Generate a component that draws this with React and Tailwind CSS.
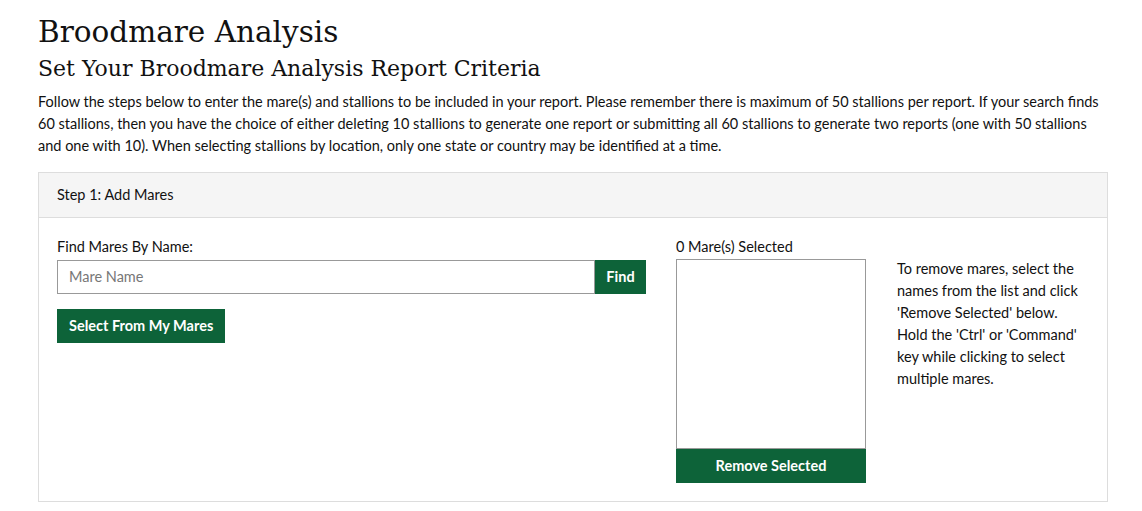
export default function App() {
  return (
    <div className="bg-white min-h-screen text-[#111] font-['Lato','Open_Sans',sans-serif]">
      <div className="pl-[38px] pr-[34px] pt-[14px]">
        <h1 className="font-['DejaVu_Serif','Liberation_Serif',serif] text-[29.5px] leading-[36px] text-[#111]">
          Broodmare Analysis
        </h1>
        <h2 className="font-['DejaVu_Serif','Liberation_Serif',serif] text-[22px] leading-[30px] mt-[4px] text-[#111]">
          Set Your Broodmare Analysis Report Criteria
        </h2>
        <p className="text-[14.5px] leading-[22px] mt-[7px]">
          Follow the steps below to enter the mare(s) and stallions to be included in your report. Please remember there is maximum of 50 stallions per report. If your search finds 60 stallions, then you have the choice of either deleting 10 stallions to generate one report or submitting all 60 stallions to generate two reports (one with 50 stallions and one with 10). When selecting stallions by location, only one state or country may be identified at a time.
        </p>

        <div className="mt-[15px] border border-[#dddddd]">
          <div className="bg-[#f5f5f5] border-b border-[#dddddd] h-[45px] flex items-center px-[18px] text-[14.5px]">
            Step 1: Add Mares
          </div>
          <div className="flex px-[18px] pt-[20px] pb-[18px]">
            <div className="w-[589px]">
              <label className="block text-[14.5px] leading-[18px] mb-[4px]">Find Mares By Name:</label>
              <div className="flex h-[34px]">
                <input
                  type="text"
                  placeholder="Mare Name"
                  className="flex-1 border border-[#999] px-[11px] text-[14.5px] placeholder-[#777] outline-none"
                />
                <button className="w-[51px] bg-[#0d6339] text-white text-[14.5px] font-bold">Find</button>
              </div>
              <button className="mt-[15px] h-[34px] px-[12px] bg-[#0d6339] text-white text-[14.5px] font-bold">
                Select From My Mares
              </button>
            </div>
            <div className="ml-[30px] w-[190px]">
              <div className="text-[14.5px] leading-[18px] mb-[3px]">0 Mare(s) Selected</div>
              <div className="h-[190px] border border-[#999]"></div>
              <button className="w-full h-[34px] bg-[#0d6339] text-white text-[14.5px] font-bold">
                Remove Selected
              </button>
            </div>
            <div className="ml-[31px] w-[190px] pt-[20px] text-[14.5px] leading-[22px]">
              To remove mares, select the names from the list and click 'Remove Selected' below. Hold the 'Ctrl' or 'Command' key while clicking to select multiple mares.
            </div>
          </div>
        </div>
      </div>
    </div>
  );
}
